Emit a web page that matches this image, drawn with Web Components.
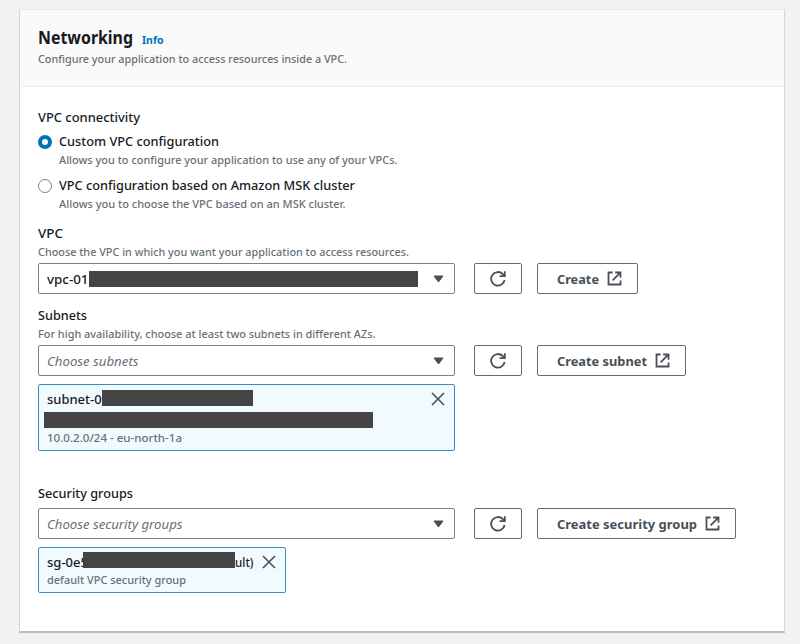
<!DOCTYPE html>
<html lang="en">
<head>
<meta charset="utf-8">
<title>Networking</title>
<style>
  :root {
    --fg: #16191f;
    --fg-muted: #687078;
    --fg-button: #4a4f56;
    --line: #7d8084;
    --accent: #0073bb;
    --token-bg: #f1faff;
    --redacted: #444;
  }
  body {
    margin: 0;
    height: 644px;
    overflow: hidden;
    padding: 9px 15px 0 19px;
    box-sizing: border-box;
    background: #f2f2f2;
    color: var(--fg);
    font: 13px/18px "Noto Sans", "Open Sans", sans-serif;
  }
</style>
</head>
<body>
<net-panel>
  <fit-text slot="title" width="95">Networking</fit-text>
  <fit-text slot="info" width="21.5">Info</fit-text>
  <fit-text slot="description" width="309">Configure your application to access resources inside a VPC.</fit-text>

  <net-field>
    <fit-text slot="label" width="102">VPC connectivity</fit-text>
    <net-radio checked>
      <fit-text width="160">Custom VPC configuration</fit-text>
      <fit-text slot="hint" width="338.5">Allows you to configure your application to use any of your VPCs.</fit-text>
    </net-radio>
    <net-radio>
      <fit-text width="296">VPC configuration based on Amazon MSK cluster</fit-text>
      <fit-text slot="hint" width="286.5">Allows you to choose the VPC based on an MSK cluster.</fit-text>
    </net-radio>
  </net-field>

  <net-field style="margin-top: 10px">
    <fit-text slot="label" width="25">VPC</fit-text>
    <fit-text slot="hint" width="371">Choose the VPC in which you want your application to access resources.</fit-text>
    <net-select><fit-text width="41.5">vpc-01</fit-text><net-redacted style="width: 329px"></net-redacted></net-select>
    <net-button slot="actions" icon="refresh"></net-button>
    <net-button slot="actions" icon="external"><fit-text width="42">Create</fit-text></net-button>
  </net-field>

  <net-field style="margin-top: 12px">
    <fit-text slot="label" width="49">Subnets</fit-text>
    <fit-text slot="hint" width="337.5">For high availability, choose at least two subnets in different AZs.</fit-text>
    <net-select placeholder><fit-text width="91.5">Choose subnets</fit-text></net-select>
    <net-button slot="actions" icon="refresh"></net-button>
    <net-button slot="actions" icon="external"><fit-text width="90">Create subnet</fit-text></net-button>
    <net-token slot="tokens" style="width: 417px; height: 67px">
      <fit-text width="62">subnet-09</fit-text><net-redacted style="width: 151px; margin-left: -7px"></net-redacted>
      <net-redacted slot="detail" style="width: 329px; margin: 4px 0 1px -3px"></net-redacted>
      <fit-text slot="hint" width="135">10.0.2.0/24 - eu-north-1a</fit-text>
    </net-token>
  </net-field>

  <net-field style="margin-top: 33px">
    <fit-text slot="label" width="95">Security groups</fit-text>
    <net-select placeholder><fit-text width="135.5">Choose security groups</fit-text></net-select>
    <net-button slot="actions" icon="refresh"></net-button>
    <net-button slot="actions" icon="external"><fit-text width="140">Create security group</fit-text></net-button>
    <net-token slot="tokens" style="width: 248px; height: 46px">
      <fit-text width="41">sg-0e5</fit-text><net-redacted style="width: 152px; margin: -1px 0 0 -5px"></net-redacted><fit-text width="18.5">ult)</fit-text>
      <fit-text slot="hint" width="139">default VPC security group</fit-text>
    </net-token>
  </net-field>
</net-panel>

<script>
const ICONS = {
  refresh: `<svg width="18" height="18" viewBox="0 0 18 18" fill="none" stroke="currentColor" stroke-width="1.8">
    <path d="M15.6 10A6.8 6.8 0 1 1 13.9 4.2L15.8 6"/><path d="M15.8 1.2V6.1H10.6"/></svg>`,
  external: `<svg width="15" height="15" viewBox="0 0 15 15" fill="none" stroke="currentColor" stroke-width="1.8">
    <path d="M5.6 1.5H1.5V13.5H13.5V9.4"/><path d="M8.2 1.5H13.5V6.8M13.3 1.7L5.6 9.4"/></svg>`,
  close: `<svg width="14" height="14" viewBox="0 0 14 14" fill="none" stroke="currentColor" stroke-width="1.6">
    <path d="M1 1L13 13M13 1L1 13"/></svg>`,
  caret: `<svg width="11" height="8" viewBox="0 0 11 8" fill="currentColor" stroke="currentColor" stroke-linejoin="round">
    <path d="M1 1H10L5.5 7Z"/></svg>`,
};

class NetElement extends HTMLElement {
  constructor() {
    super();
    this.attachShadow({ mode: "open" });
    this.shadowRoot.innerHTML = this.template();
  }
}

customElements.define("net-redacted", class extends NetElement {
  template() {
    return `<style>
      :host { display: block; position: relative; flex: none; height: 16px; background: var(--redacted); }
    </style>`;
  }
});

customElements.define("net-panel", class extends NetElement {
  template() {
    return `<style>
      :host {
        display: block;
        box-sizing: border-box;
        height: 624px;
        background: #fff;
        border: 1px solid #d5d5d5;
        border-top-color: #eaeaea;
        border-bottom: 2px solid #bcbcbc;
      }
      header {
        box-sizing: border-box;
        height: 77px;
        padding: 16px 18px 0;
        background: #fafafa;
        border-bottom: 1px solid #eaeaea;
      }
      .heading { display: flex; align-items: baseline; gap: 9px; height: 24px; line-height: 24px; }
      .title { font-size: 17px; font-weight: 700; }
      .info { font-size: 11px; font-weight: 700; color: var(--accent); }
      .description { font-size: 11px; line-height: 18px; font-weight: 500; color: var(--fg-muted); }
      main { padding: 21px 18px 0; }
    </style>
    <header>
      <div class="heading">
        <slot class="title" name="title"></slot>
        <slot class="info" name="info"></slot>
      </div>
      <slot class="description" name="description"></slot>
    </header>
    <main><slot></slot></main>`;
  }
});

customElements.define("net-field", class extends NetElement {
  template() {
    return `<style>
      :host { display: block; }
      .label { display: block; height: 18px; font-weight: 500; }
      .hint { display: block; font-size: 11px; line-height: 20px; font-weight: 500; color: var(--fg-muted); }
      .row { display: flex; flex-wrap: wrap; gap: 15px; margin-top: 6px; }
      .hinted .row { margin-top: 1px; }
      .tokens { display: block; }
      ::slotted(net-token) { margin-top: 8px; }
    </style>
    <div>
      <div class="label"><slot name="label"></slot></div>
      <div class="hint"><slot name="hint"></slot></div>
      <div class="row"><slot></slot><slot name="actions"></slot></div>
      <div class="tokens"><slot name="tokens"></slot></div>
    </div>`;
  }
  connectedCallback() {
    const hinted = [...this.children].some((el) => el.slot === "hint");
    this.shadowRoot.querySelector("div").classList.toggle("hinted", hinted);
    // radio groups stack instead of sitting in a control row
    if (this.querySelector("net-radio")) this.shadowRoot.querySelector(".row").style.display = "block";
  }
});

customElements.define("net-radio", class extends NetElement {
  template() {
    return `<style>
      :host { display: flex; gap: 7px; height: 38px; }
      :host(:not(:first-of-type)) { margin-top: 6px; }
      i {
        box-sizing: border-box;
        width: 14px;
        height: 14px;
        margin-top: 3px;
        border: 1px solid var(--line);
        border-radius: 50%;
        background: #fff;
      }
      :host([checked]) i { border: 4px solid var(--accent); }
      .name { font-weight: 500; }
      .hint { font-size: 11px; line-height: 20px; font-weight: 500; color: var(--fg-muted); }
    </style>
    <i></i>
    <div>
      <div class="name"><slot></slot></div>
      <div class="hint"><slot name="hint"></slot></div>
    </div>`;
  }
});

customElements.define("net-select", class extends NetElement {
  template() {
    return `<style>
      :host {
        display: flex;
        align-items: center;
        box-sizing: border-box;
        width: 417px;
        height: 31px;
        padding: 0 10px 0 8px;
        border: 1px solid var(--line);
        border-radius: 2px;
        background: #fff;
        font-weight: 500;
      }
      :host([placeholder]) { font-style: italic; font-weight: 400; color: var(--fg-muted); }
      svg { margin-left: auto; color: var(--fg-button); }
    </style>
    <slot></slot>${ICONS.caret}`;
  }
});

customElements.define("net-button", class extends NetElement {
  template() {
    return `<style>
      :host {
        display: flex;
        align-items: center;
        justify-content: center;
        gap: 8px;
        box-sizing: border-box;
        height: 31px;
        padding: 0 15px 0 19px;
        border: 1px solid #66696d;
        border-radius: 2px;
        background: #fff;
        color: var(--fg-button);
        font-weight: 700;
      }
      :host([icon="refresh"]) { width: 48px; padding: 0; margin-left: 4px; }
      svg { display: block; flex: none; }
    </style>
    <slot></slot>${ICONS[this.getAttribute("icon")] ?? ""}`;
  }
});

customElements.define("net-token", class extends NetElement {
  template() {
    return `<style>
      :host {
        display: flex;
        justify-content: space-between;
        box-sizing: border-box;
        padding: 5px 9px 0 8px;
        border: 1px solid #3c8dc4;
        border-radius: 2px;
        background: var(--token-bg);
        font-weight: 500;
      }
      .name { display: flex; height: 18px; }
      .hint { font-size: 11px; line-height: 18px; color: var(--fg-muted); }
      svg { flex: none; margin-top: 2px; color: var(--fg-button); }
    </style>
    <div>
      <div class="name"><slot></slot></div>
      <slot name="detail"></slot>
      <div class="hint"><slot name="hint"></slot></div>
    </div>
    ${ICONS.close}`;
  }
});

// One line of text set to a fixed measure, squeezed or stretched evenly.
// Defined last: it measures with the fonts that the elements around it set.
customElements.define("fit-text", class extends NetElement {
  template() {
    return `<style>
      :host { display: block; flex: none; white-space: nowrap; }
      span { display: inline-block; transform-origin: 0 50%; }
    </style><span><slot></slot></span>`;
  }
  connectedCallback() {
    const span = this.shadowRoot.querySelector("span");
    const width = Number(this.getAttribute("width"));
    this.style.width = `${width}px`;
    const natural = span.getBoundingClientRect().width;
    if (natural) span.style.transform = `scaleX(${width / natural})`;
  }
});
</script>
</body>
</html>
